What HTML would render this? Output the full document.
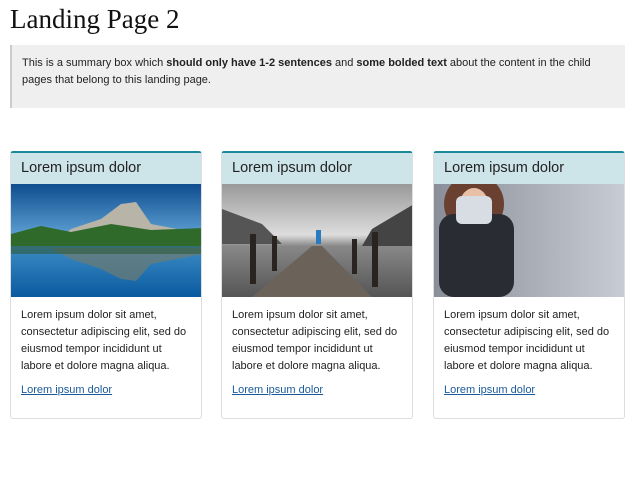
<!DOCTYPE html>
<html><head><meta charset="utf-8"><style>
body{margin:0;width:635px;height:479px;background:#fff;font-family:"Liberation Sans",sans-serif;color:#222;position:relative;overflow:hidden}
h1{position:absolute;left:10px;top:4px;margin:0;font-family:"Liberation Serif",serif;font-weight:normal;font-size:27px;color:#111}
.sum{position:absolute;left:10px;top:45px;width:613px;height:63px;background:#efefef;border-left:2px solid #ccc;font-size:11px;line-height:16.5px;color:#222;padding:0}
.sum p{margin:10px 0 0 10px;width:590px}
.card{position:absolute;top:151px;width:190px;height:265px;border:1px solid #ddd;border-top:2px solid #1a8a9a;border-radius:3px;background:#fff;overflow:hidden}
.hd{height:31px;background:#cde4e9;font-size:14.5px;line-height:31px;padding-left:10px;color:#222}
.img{height:113px}
.tx{font-size:11px;line-height:17px;margin:10px 10px 0;color:#222}
.ln{font-size:11px;margin:9px 10px 0;color:#1a5a9a;text-decoration:underline}
</style></head><body>
<h1>Landing Page 2</h1>
<div class="sum"><p>This is a summary box which <b>should only have 1-2 sentences</b> and <b>some bolded text</b> about the content in the child pages that belong to this landing page.</p></div>

<div class="card" style="left:10px"><div class="hd">Lorem ipsum dolor</div>
<div class="img"><svg width="192" height="113"><defs><linearGradient id="s" x1="0" y1="0" x2="0" y2="1"><stop offset="0" stop-color="#0f4d8f"/><stop offset="1" stop-color="#6aaede"/></linearGradient><linearGradient id="w" x1="0" y1="0" x2="0" y2="1"><stop offset="0" stop-color="#3b8cc4"/><stop offset="1" stop-color="#0a5aa0"/></linearGradient></defs>
<rect width="192" height="60" fill="url(#s)"/>
<polygon points="60,45 90,35 110,20 125,18 140,40 192,50 192,62 40,62" fill="#b9b4a8"/>
<polygon points="0,50 30,42 60,48 100,40 140,46 192,44 192,65 0,65" fill="#2f6a2a"/>
<rect y="62" width="192" height="51" fill="url(#w)"/>
<polygon points="60,75 90,85 110,95 125,97 140,80 192,70 192,64 40,64" fill="#6f7c70" opacity=".7"/>
<rect y="62" width="192" height="8" fill="#2f5a3a" opacity=".6"/></svg></div>
<div class="tx">Lorem ipsum dolor sit amet, consectetur adipiscing elit, sed do eiusmod tempor incididunt ut labore et dolore magna aliqua.</div>
<div class="ln">Lorem ipsum dolor</div></div>

<div class="card" style="left:221px"><div class="hd">Lorem ipsum dolor</div>
<div class="img"><svg width="192" height="113"><defs><linearGradient id="g2" x1="0" y1="0" x2="0" y2="1"><stop offset="0" stop-color="#999"/><stop offset=".45" stop-color="#ddd"/><stop offset=".55" stop-color="#888"/><stop offset="1" stop-color="#555"/></linearGradient></defs>
<rect width="192" height="113" fill="url(#g2)"/>
<polygon points="0,25 40,40 60,60 0,60" fill="#555"/><polygon points="192,20 150,45 140,62 192,62" fill="#444"/>
<polygon points="90,62 100,62 150,113 30,113" fill="#6b625a"/>
<rect x="28" y="50" width="6" height="50" fill="#2a2420"/><rect x="50" y="52" width="5" height="35" fill="#2a2420"/><rect x="150" y="48" width="6" height="55" fill="#2a2420"/><rect x="130" y="55" width="5" height="35" fill="#2a2420"/>
<rect x="94" y="46" width="5" height="14" fill="#2a7ac0"/></svg></div>
<div class="tx">Lorem ipsum dolor sit amet, consectetur adipiscing elit, sed do eiusmod tempor incididunt ut labore et dolore magna aliqua.</div>
<div class="ln">Lorem ipsum dolor</div></div>

<div class="card" style="left:433px"><div class="hd">Lorem ipsum dolor</div>
<div class="img"><svg width="192" height="113"><defs><linearGradient id="g3" x1="0" y1="0" x2="1" y2="0"><stop offset="0" stop-color="#8a8e98"/><stop offset="1" stop-color="#c8ccd4"/></linearGradient></defs>
<rect width="192" height="113" fill="url(#g3)"/>
<ellipse cx="40" cy="20" rx="30" ry="30" fill="#6a4030"/>
<rect x="5" y="30" width="75" height="83" rx="15" fill="#2a2c34"/>
<ellipse cx="40" cy="20" rx="14" ry="16" fill="#e8c0a8"/>
<rect x="22" y="12" width="36" height="28" rx="6" fill="#d8dde4"/></svg></div>
<div class="tx">Lorem ipsum dolor sit amet, consectetur adipiscing elit, sed do eiusmod tempor incididunt ut labore et dolore magna aliqua.</div>
<div class="ln">Lorem ipsum dolor</div></div>
</body></html>
